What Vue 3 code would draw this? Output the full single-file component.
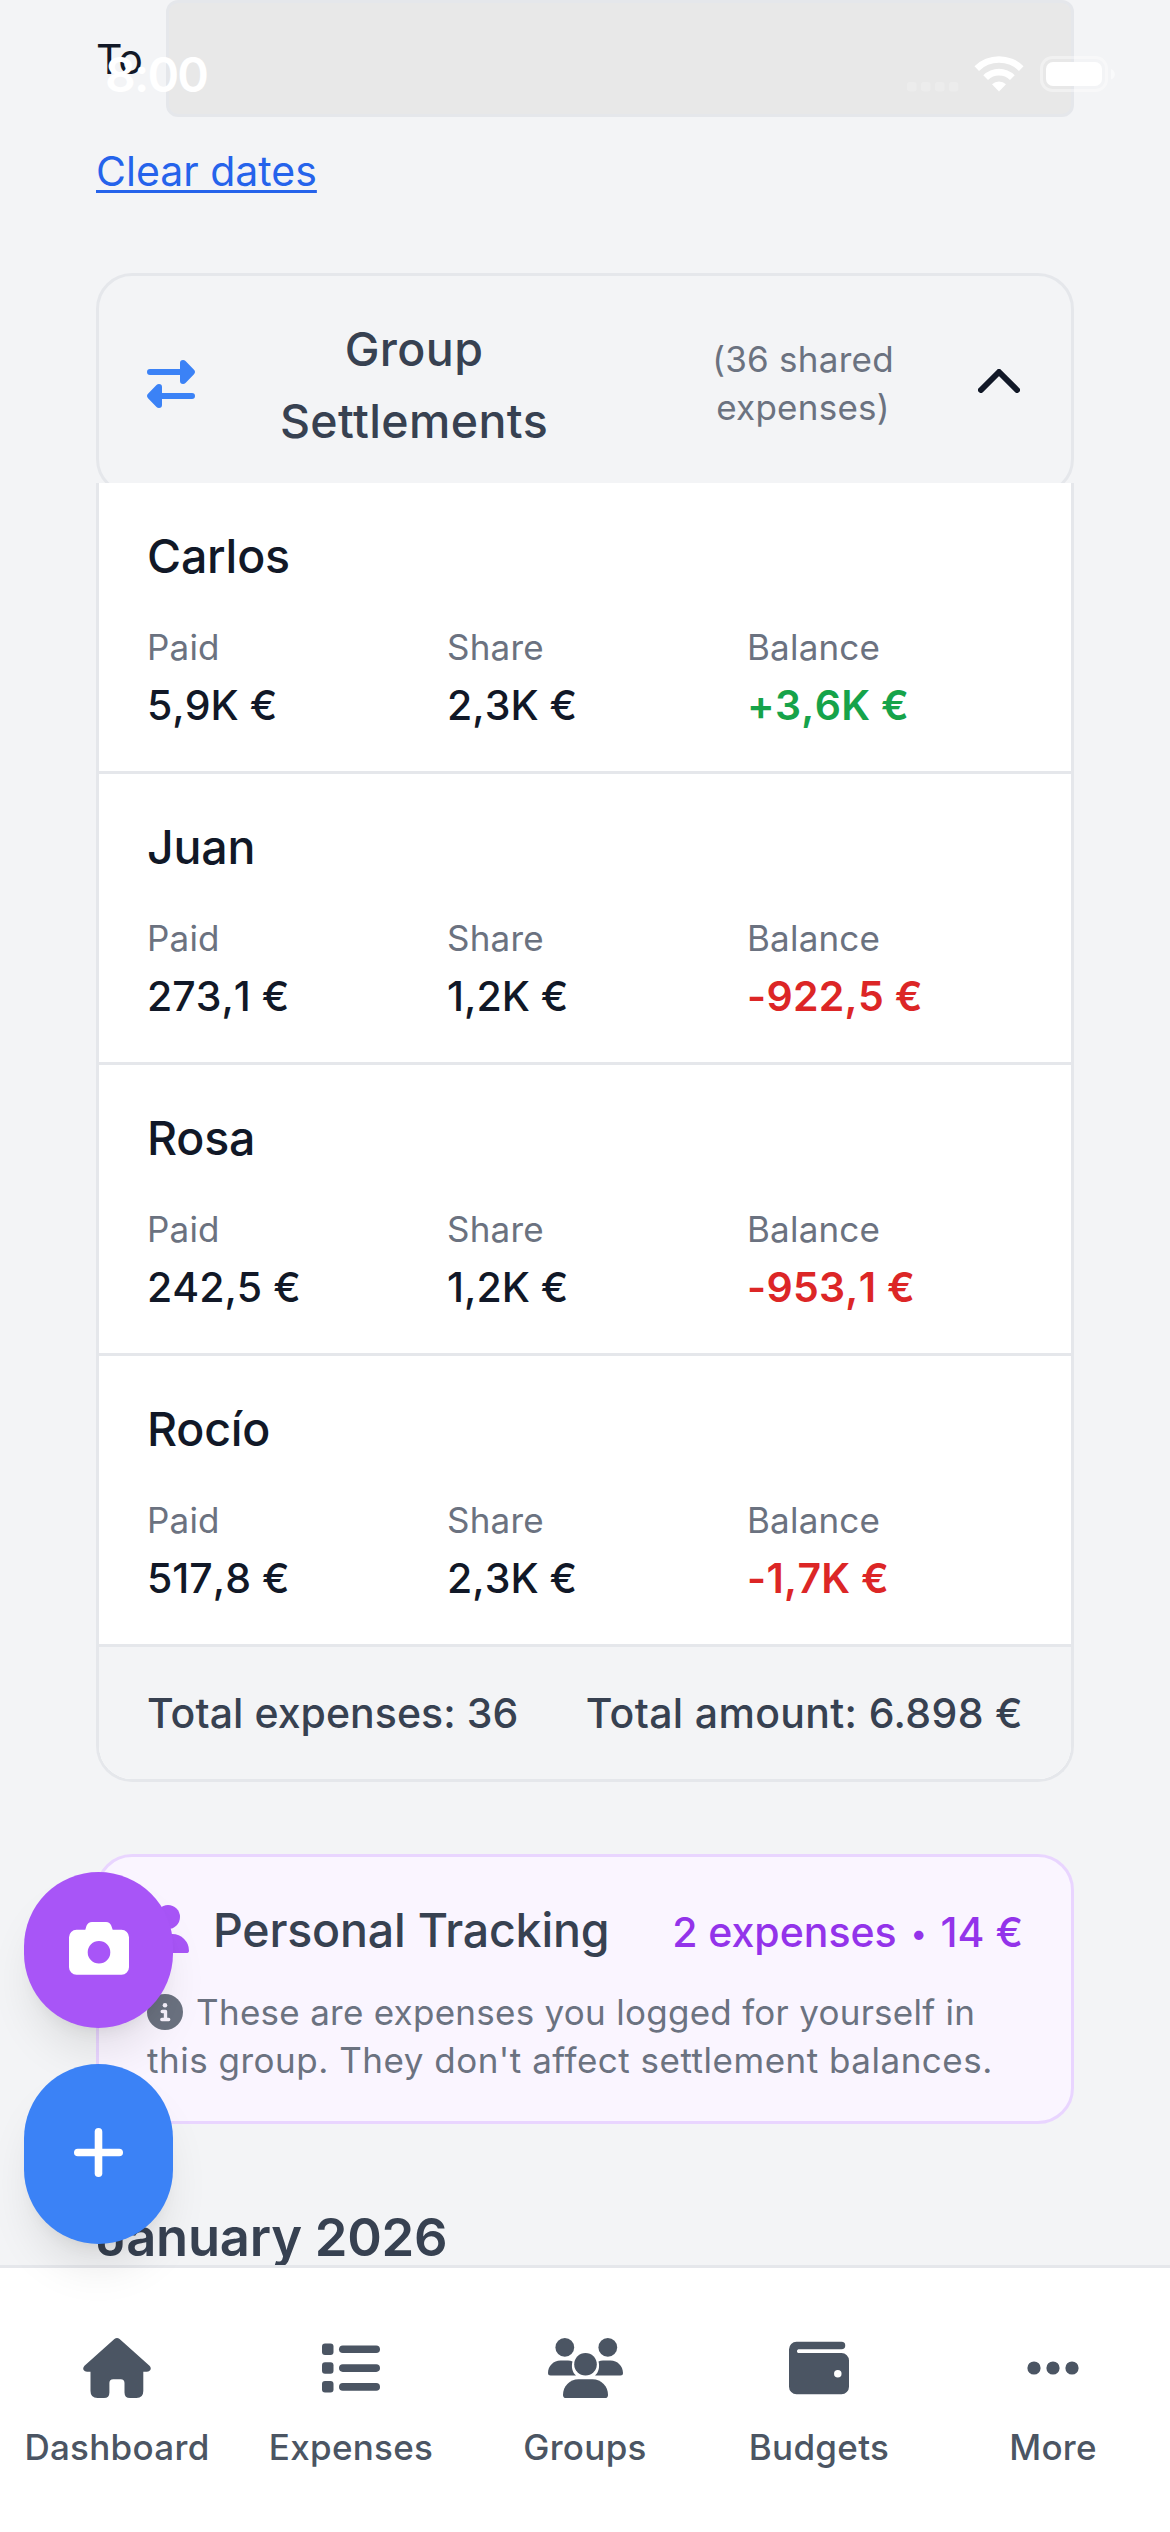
<template>
  <div class="screen">
    <main class="content">
      <div class="date-row">
        <label class="date-label">To</label>
        <div class="date-input"></div>
      </div>
      <a class="clear-link">Clear dates</a>

      <section class="settlements">
        <button class="settlements-header">
          <svg class="icon-swap" viewBox="0 0 48 48">
            <path d="M3 9H33V3Q33 0 36 0Q37.500 0 38.500 1L47 9.800Q49 12 47 14.200L38.500 23Q37.500 24 36 24Q33 24 33 21V15H3A3 3 0 0 1 3 9Z" />
            <path d="M45 33H15V27Q15 24 12 24Q10.500 24 9.500 25L1 33.800Q-1 36 1 38.200L9.500 47Q10.500 48 12 48Q15 48 15 45V39H45A3 3 0 0 0 45 33Z" />
          </svg>
          <span class="settlements-title">Group Settlements</span>
          <span class="settlements-count">(36 shared expenses)</span>
          <svg class="icon-chevron" viewBox="0 0 42 24">
            <path d="M3 21L21 3L39 21" />
          </svg>
        </button>

        <div class="settlements-body">
          <div v-for="member in members" :key="member.name" class="member">
            <div class="member-name">{{ member.name }}</div>
            <div class="member-stats">
              <div>
                <div class="stat-label">Paid</div>
                <div class="stat-value">{{ member.paid }}</div>
              </div>
              <div>
                <div class="stat-label">Share</div>
                <div class="stat-value">{{ member.share }}</div>
              </div>
              <div>
                <div class="stat-label">Balance</div>
                <div class="stat-value balance" :class="isPositive(member) ? 'balance--up' : 'balance--down'">
                  {{ member.balance }}
                </div>
              </div>
            </div>
          </div>
          <div class="totals">
            <span class="total-count">Total expenses: 36</span>
            <span class="total-amount">Total amount: 6.898 €</span>
          </div>
        </div>
      </section>

      <section class="personal">
        <div class="personal-head">
          <svg class="icon-user" viewBox="0 0 42 48">
            <circle cx="21" cy="12" r="12" />
            <path d="M16.700 29H25.300A16.700 16.700 0 0 1 42 45.700Q42 48 39.200 48H2.800Q0 48 0 45.700A16.700 16.700 0 0 1 16.700 29Z" />
          </svg>
          <span class="personal-title">Personal Tracking</span>
          <span class="personal-sum">2 expenses <span class="bullet">•</span> 14 €</span>
        </div>
        <p class="personal-note">
          <svg class="icon-info" viewBox="0 0 36 36">
            <circle cx="18" cy="18" r="18" />
            <circle class="knock" cx="18" cy="11.300" r="2.300" />
            <path class="knock-line" d="M15.200 17.500H18.500V25.500M14.800 25.500H21.700" />
          </svg>
          These are expenses you logged for yourself in<br /><span class="note-end">this group. They don't affect settlement balances.</span>
        </p>
      </section>

      <h2 class="month">January 2026</h2>
    </main>

    <nav class="tabbar">
      <a class="tab">
        <svg class="tab-icon" width="68" height="60" viewBox="0 0 68 60">
          <path d="M31.400 1Q34 -1 36.600 1L66.500 27.800Q68.500 30 67.300 32Q66.300 33.700 64 33.700H60.300V53Q60.300 60 53.500 60H47Q41.500 60 41.500 54.500V45Q41.500 41.200 37.700 41.200H30.200Q26.400 41.200 26.400 45V54.500Q26.400 60 21 60H14.500Q7.500 60 7.500 53V33.700H4Q1.700 33.700 0.600 32Q-0.500 30 1.500 27.800Z" />
        </svg>
        <span>Dashboard</span>
      </a>
      <a class="tab">
        <svg class="tab-icon" width="58" height="60" viewBox="0 0 58 60">
          <g v-for="y in [5.500, 24.300, 43.100]" :key="y">
            <rect x="0" :y="y" width="11.500" height="11.500" rx="3" />
            <rect x="17" :y="y + 2" width="41" height="7.600" rx="3.800" />
          </g>
        </svg>
        <span>Expenses</span>
      </a>
      <a class="tab">
        <svg class="tab-icon" width="75" height="60" viewBox="0 0 75 60">
          <circle cx="16.800" cy="9.400" r="9.400" />
          <circle cx="59.800" cy="9.400" r="9.400" />
          <path d="M12.500 22.500H20Q22.500 22.500 24.500 23.400C23 29 24.500 34.500 28 37.500H2.500Q0 37.500 0 35C0 28 5.600 22.500 12.500 22.500Z" />
          <path d="M62.500 22.500H55Q52.500 22.500 50.500 23.400C52 29 50.500 34.500 47 37.500H72.500Q75 37.500 75 35C75 28 69.400 22.500 62.500 22.500Z" />
          <circle cx="37.500" cy="26.300" r="11.300" />
          <path d="M30.600 41.300H44.400C53.500 41.300 60 48.500 60 56.900Q60 60 57 60H18Q15 60 15 56.900C15 48.500 21.500 41.300 30.600 41.300Z" />
        </svg>
        <span>Groups</span>
      </a>
      <a class="tab">
        <svg class="tab-icon" width="60" height="60" viewBox="0 0 60 60">
          <path fill-rule="evenodd" d="M7.500 3.800H52.500A3.750 3.750 0 0 1 52.500 11.300H9.400A1.900 1.900 0 0 0 9.400 15H52.500A7.500 7.500 0 0 1 60 22.500V48.800A7.500 7.500 0 0 1 52.500 56.300H7.500A7.500 7.500 0 0 1 0 48.800V11.300A7.500 7.500 0 0 1 7.500 3.800ZM48.800 31.900A3.750 3.750 0 1 0 48.800 39.400A3.750 3.750 0 1 0 48.800 31.900Z" />
        </svg>
        <span>Budgets</span>
      </a>
      <a class="tab">
        <svg class="tab-icon" width="52" height="60" viewBox="0 0 52 60">
          <circle cx="7" cy="30" r="6.600" />
          <circle cx="26" cy="30" r="6.600" />
          <circle cx="45" cy="30" r="6.600" />
        </svg>
        <span>More</span>
      </a>
    </nav>

    <div class="fabs">
      <button class="fab fab--scan">
        <svg width="60" height="53" viewBox="0 0 60 53">
          <path fill-rule="evenodd" d="M17.500 3.800Q19 0 23 0H37Q41 0 42.300 3.800L43.700 7.700H52.500A7.500 7.500 0 0 1 60 15.200V45.300A7.500 7.500 0 0 1 52.500 52.800H7.500A7.500 7.500 0 0 1 0 45.300V15.200A7.500 7.500 0 0 1 7.500 7.700H16.300ZM30 19A11.300 11.300 0 1 0 30 41.600A11.300 11.300 0 1 0 30 19Z" />
        </svg>
      </button>
      <button class="fab fab--add">
        <svg width="49" height="49" viewBox="0 0 49 49">
          <rect x="0" y="20.700" width="49" height="7.600" rx="3.800" />
          <rect x="20.700" y="0" width="7.600" height="49" rx="3.800" />
        </svg>
      </button>
    </div>

    <div class="statusbar">
      <span class="clock">8:00</span>
      <svg class="status-icons" width="210" height="38" viewBox="0 0 210 38">
        <g opacity="0.200">
          <rect v-for="x in [1, 15, 29, 42.800]" :key="x" :x="x" y="27" width="9.600" height="9.400" rx="3" />
        </g>
        <path d="M68.500 11.200A35 35 0 0 1 117.500 11.200L113 16A28.200 28.200 0 0 0 73 16Z" />
        <path d="M77.300 20.200A22.500 22.500 0 0 1 108.700 20.200L104 25A15.800 15.800 0 0 0 82 25Z" />
        <path d="M86 29.200A10.300 10.300 0 0 1 100 29.200L93 36.400Z" />
        <rect class="battery-shell" x="135.500" y="2.500" width="65" height="33" rx="11" />
        <rect x="140" y="7" width="56" height="24" rx="7" />
        <path opacity="0.500" d="M205 14A5.500 5.500 0 0 1 205 24.500Z" />
      </svg>
    </div>
  </div>
</template>

<script setup>
import { ref } from 'vue'

const members = ref([
  { name: 'Carlos', paid: '5,9K €', share: '2,3K €', balance: '+3,6K €' },
  { name: 'Juan', paid: '273,1 €', share: '1,2K €', balance: '-922,5 €' },
  { name: 'Rosa', paid: '242,5 €', share: '1,2K €', balance: '-953,1 €' },
  { name: 'Rocío', paid: '517,8 €', share: '2,3K €', balance: '-1,7K €' },
])

function isPositive(member) {
  return member.balance.startsWith('+')
}
</script>

<style>
body {
  margin: 0;
  background: #f3f4f6;
}
</style>

<style scoped>
.screen {
  position: relative;
  height: 2532px;
  overflow: hidden;
  background: #f3f4f6;
  color: #111827;
  font-family: Inter, "Liberation Sans", sans-serif;
  font-size: 41px;
  line-height: 60px;
}

button {
  font: inherit;
  color: inherit;
}

.content {
  display: flex;
  flex-direction: column;
  padding: 0 96px;
}

.date-row {
  display: flex;
  align-items: center;
  gap: 24px;
  height: 117px;
}

.date-label {
  width: 46px;
  letter-spacing: -1px;
}

.date-input {
  flex: 1;
  height: 117px;
  box-sizing: border-box;
  border: 3px solid #e5e7eb;
  border-radius: 12px;
  background: #e8e8e8;
}

.clear-link {
  align-self: flex-start;
  margin-top: 24px;
  color: #2563eb;
  text-decoration: underline;
  text-decoration-thickness: 3px;
  text-underline-offset: 4px;
  text-decoration-skip-ink: none;
}

.settlements { margin-top: 72px; }

.settlements-header {
  display: flex;
  align-items: center;
  width: 100%;
  height: 222px;
  padding: 0 51px 0 48px;
  border: 3px solid #e5e7eb;
  border-radius: 36px;
  background: #f3f4f6;
  box-sizing: border-box;
}

.icon-swap {
  width: 48px;
  height: 48px;
  fill: #3b82f6;
}

.settlements-title {
  width: 290px;
  margin-left: 74px;
  padding-top: 2px;
  font-size: 46.500px;
  font-weight: 500;
  line-height: 72px;
  letter-spacing: 0.400px;
  text-align: center;
  color: #374151;
}

.settlements-count {
  width: 200px;
  margin-left: 144px;
  padding-bottom: 3px;
  font-size: 35px;
  line-height: 48px;
  letter-spacing: 0.250px;
  text-align: center;
  color: #6b7280;
}

.icon-chevron {
  width: 42px;
  height: 24px;
  margin-left: auto;
  margin-top: -6px;
  fill: none;
  stroke: #111827;
  stroke-width: 6;
  stroke-linecap: round;
  stroke-linejoin: round;
}

/* body slides up over the rounded bottom of the header */
.settlements-body {
  position: relative;
  margin-top: -12px;
  border: 3px solid #e5e7eb;
  border-top: 0;
  border-radius: 0 0 36px 36px;
  background: #fff;
  overflow: hidden;
}

.member {
  padding: 37px 48px 32px;
  border-bottom: 3px solid #e5e7eb;
}

.member-name {
  font-size: 46.500px;
  font-weight: 500;
  line-height: 72px;
  letter-spacing: -0.200px;
}

.member-stats {
  display: grid;
  grid-template-columns: repeat(3, 1fr);
  gap: 24px;
  margin-top: 31px;
}

.stat-label {
  font-size: 35px;
  line-height: 48px;
  letter-spacing: 0.200px;
  color: #6b7280;
}

.stat-value {
  font-weight: 500;
  line-height: 68px;
  font-kerning: none;
}

.balance {
  font-weight: 600;
  letter-spacing: 0.300px;
}

.balance--up { color: #16a34a; }
.balance--down { color: #dc2626; }

.totals {
  display: flex;
  justify-content: space-between;
  padding: 36px 48px;
  background: #f3f4f6;
  color: #374151;
  font-weight: 500;
}

.total-count { letter-spacing: 0.060px; }
.total-amount { letter-spacing: 0.350px; }

.personal {
  margin-top: 72px;
  padding: 36px 48px;
  border: 3px solid #e9d5ff;
  border-radius: 36px;
  background: #faf5ff;
}

.personal-head {
  display: flex;
  align-items: center;
  height: 72px;
}

.icon-user {
  width: 42px;
  height: 48px;
  margin-right: 24px;
  fill: #a855f7;
}

.personal-title {
  padding-top: 2px;
  font-size: 46.500px;
  font-weight: 500;
  letter-spacing: -0.200px;
  color: #374151;
}

.personal-sum {
  margin-left: auto;
  padding-top: 6px;
  font-weight: 500;
  color: #9333ea;
}

.bullet {
  position: relative;
  top: -3px;
  margin: 0 3px;
  font-size: 30px;
  line-height: 1;
}

.personal-note {
  margin: 23px 0 1px;
  font-size: 35px;
  line-height: 48px;
  letter-spacing: 0.270px;
  color: #6b7280;
  white-space: nowrap;
}

.note-end { letter-spacing: 0.510px; }

.icon-info {
  width: 36px;
  height: 36px;
  margin-right: 3px;
  vertical-align: -5px;
  fill: #6b7280;
}

.icon-info .knock { fill: #faf5ff; }

.icon-info .knock-line {
  fill: none;
  stroke: #faf5ff;
  stroke-width: 3.400;
  stroke-linecap: round;
  stroke-linejoin: round;
}

.month {
  margin: 71px 0 0;
  font-size: 52.500px;
  font-weight: 600;
  line-height: 84px;
  letter-spacing: -0.250px;
  color: #374151;
}

.tabbar {
  position: absolute;
  left: 0;
  right: 0;
  bottom: 0;
  display: grid;
  grid-template-columns: repeat(5, 1fr);
  height: 264px;
  border-top: 3px solid #e5e7eb;
  background: #fff;
}

.tab {
  display: flex;
  flex-direction: column;
  align-items: center;
  gap: 25px;
  padding-top: 70px;
  font-size: 35px;
  font-weight: 500;
  line-height: 48px;
  letter-spacing: 0.300px;
  color: #4b5563;
}

.tab-icon { fill: currentColor; }

.fabs {
  position: absolute;
  left: 24px;
  top: 1872px;
  display: flex;
  flex-direction: column;
  gap: 36px;
}

.fab {
  display: flex;
  align-items: center;
  justify-content: center;
  width: 149px;
  padding: 0 0 3px;
  border: 0;
  border-radius: 999px;
  box-sizing: border-box;
  fill: #fff;
  box-shadow: 0 30px 45px -9px rgba(0, 0, 0, 0.1), 0 12px 18px -12px rgba(0, 0, 0, 0.1);
}

.fab--scan {
  height: 156px;
  background: #a855f7;
}

.fab--add {
  height: 180px;
  background: #3b82f6;
}

.statusbar {
  position: absolute;
  top: 0;
  left: 105px;
  right: 54px;
  display: flex;
  justify-content: space-between;
  padding-top: 44px;
  color: #fff;
}

.clock {
  padding-top: 1px;
  font-size: 48px;
  font-weight: 600;
  letter-spacing: -1.800px;
}

.status-icons {
  margin-top: 11px;
  fill: #fff;
}

.battery-shell {
  fill: none;
  stroke: #fff;
  stroke-width: 3;
  opacity: 0.400;
}
</style>
